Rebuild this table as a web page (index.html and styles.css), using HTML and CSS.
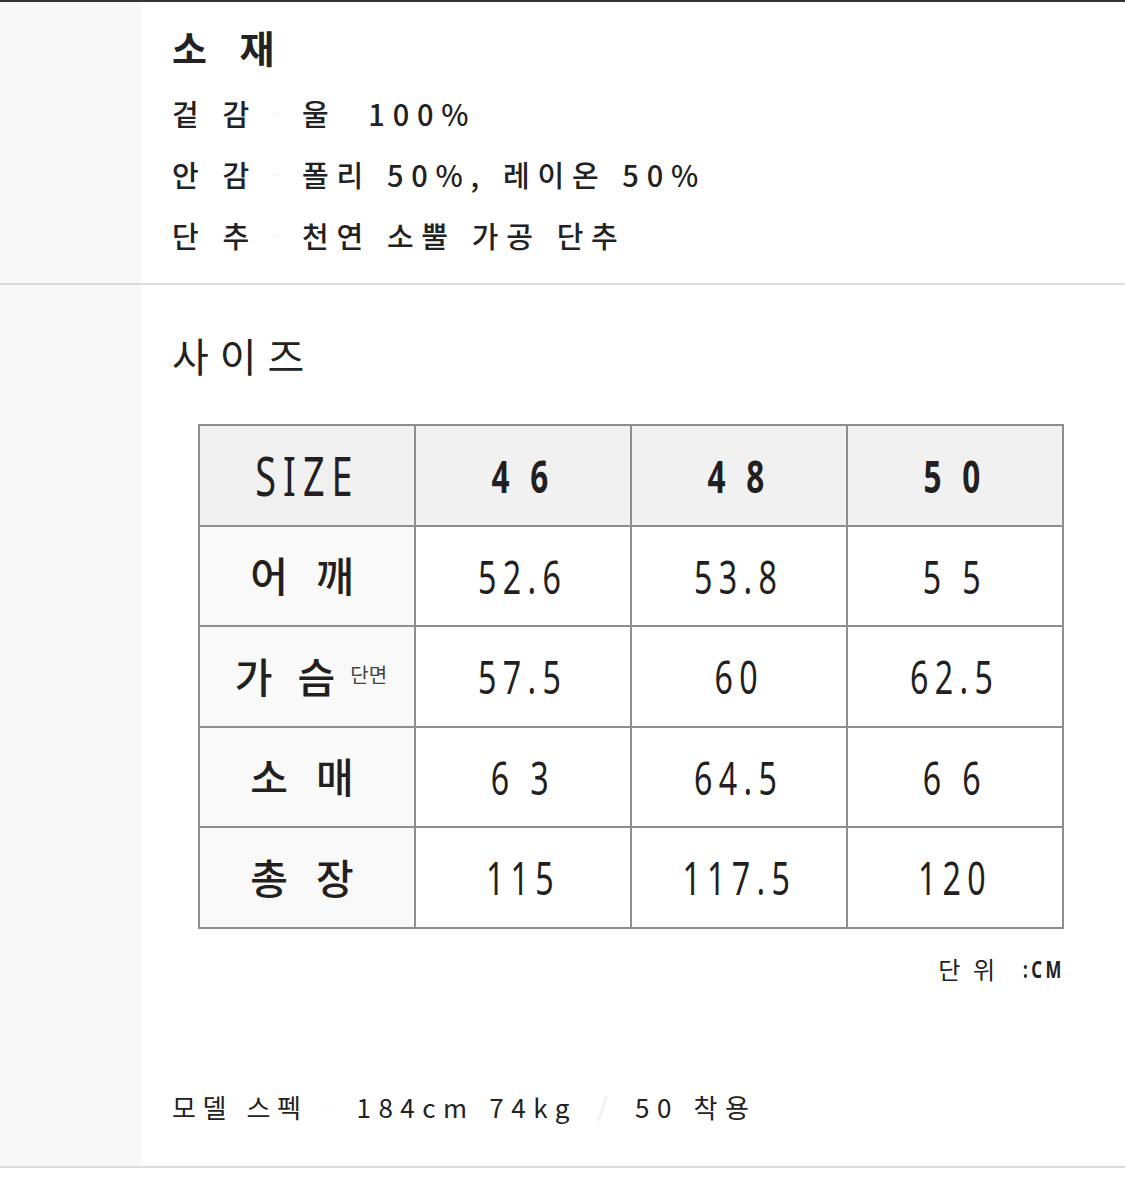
FILE: index.html
```html
<!DOCTYPE html>
<html lang="ko">
<head>
<meta charset="utf-8">
<link rel="stylesheet" href="styles.css">
</head>
<body>
<div class="page">
  <section class="sec sec-material">
    <div class="aside"></div>
    <div class="content">
      <h2 class="title">소 재</h2>
      <div class="row"><span class="label">겉 감</span><span class="sep">-</span><span class="value">울&nbsp;&nbsp;100%</span></div>
      <div class="row"><span class="label">안 감</span><span class="sep">-</span><span class="value">폴리 50%, 레이온 50%</span></div>
      <div class="row"><span class="label">단 추</span><span class="sep">-</span><span class="value">천연 소뿔 가공 단추</span></div>
    </div>
  </section>
  <section class="sec sec-size">
    <div class="aside"></div>
    <div class="content">
      <h2 class="title-size">사이즈</h2>
      <table class="size-table">
        <tr class="head">
          <th><span class="n n-size">SIZE</span></th>
          <th><span class="n n-head">4 6</span></th>
          <th><span class="n n-head">4 8</span></th>
          <th><span class="n n-head">5 0</span></th>
        </tr>
        <tr>
          <td class="rl"><span class="kl"><span>어</span><span>깨</span></span></td>
          <td><span class="n">52.6</span></td><td><span class="n">53.8</span></td><td><span class="n">5 5</span></td>
        </tr>
        <tr>
          <td class="rl"><span class="kl kl-chest"><span>가</span><span>슴</span><small>단면</small></span></td>
          <td><span class="n">57.5</span></td><td><span class="n">60</span></td><td><span class="n">62.5</span></td>
        </tr>
        <tr>
          <td class="rl"><span class="kl"><span>소</span><span>매</span></span></td>
          <td><span class="n">6 3</span></td><td><span class="n">64.5</span></td><td><span class="n">6 6</span></td>
        </tr>
        <tr>
          <td class="rl"><span class="kl"><span>총</span><span>장</span></span></td>
          <td><span class="n">115</span></td><td><span class="n">117.5</span></td><td><span class="n">120</span></td>
        </tr>
      </table>
      <div class="unit"><span class="unit-ko">단 위</span><span class="unit-en">:CM</span></div>
      <div class="model"><span class="m-label">모델 스펙</span><span class="m-sep">-</span><span class="m-val">184cm 74kg</span><span class="m-slash">/</span><span class="m-val">50 착용</span></div>
    </div>
  </section>
</div>
</body>
</html>
```
FILE: styles.css
```css
* { box-sizing: border-box; }
html, body { margin: 0; padding: 0; background: #fff; }
body {
  font-family: "Noto Sans CJK KR", "Noto Sans", sans-serif;
  color: #222;
}
.page {
  border-top: 2px solid #333;
}
.sec {
  display: flex;
  border-bottom: 2px solid #dcdcdc;
}
.aside {
  width: 141px;
  flex: none;
  background: #f8f8f8;
}
.content {
  flex: 1;
  padding-left: 31px;
}
.sec-material .content {
  padding-top: 22px;
  padding-bottom: 18px;
}
.title {
  margin: 0 0 12px;
  font-size: 38px;
  line-height: 46px;
  font-weight: 700;
  letter-spacing: 11px;
}
.row {
  display: flex;
  align-items: center;
  height: 61px;
  font-size: 29px;
  font-weight: 500;
  letter-spacing: 7.8px;
}
.label { width: 100px; }
.sep {
  width: 30px;
  color: #f0f0f0;
  font-size: 16px;
}
.value { white-space: pre; }

.sec-size .content {
  padding-top: 45px;
  padding-bottom: 41px;
}
.title-size {
  margin: 0;
  font-size: 40px;
  line-height: 50px;
  font-weight: 400;
  letter-spacing: 11px;
}
.size-table {
  margin: 44px 0 0 26px;
  border-collapse: collapse;
  table-layout: fixed;
  width: 865px;
  border: 2px solid #8e8e8e;
}
.size-table th, .size-table td {
  width: 216px;
  height: 100.5px;
  border: 2px solid #8e8e8e;
  text-align: center;
  vertical-align: middle;
  padding: 0;
  color: #231f20;
  font-weight: 400;
}
.head th { background: #f1f1f1; }
.n {
  display: inline-block;
  font-family: "Noto Sans", sans-serif;
  font-size: 46px;
  line-height: 1;
  letter-spacing: 9px;
  transform: scaleX(0.7);
  white-space: pre;
}
.n-head {
  font-size: 45px;
  font-weight: 700;
}
.n-size {
  font-size: 54px;
  letter-spacing: 10px;
}
.size-table td.rl { background: #f9f9f9; }
.kl {
  display: inline-flex;
  align-items: center;
  gap: 28px;
  font-size: 41px;
  font-weight: 500;
  line-height: 1;
  margin-right: 10px;
}
.kl-chest { margin-left: 8px; margin-right: 0; gap: 25px; }
.kl small {
  font-size: 20px;
  font-weight: 400;
  margin-left: -10px;
  color: #444;
}
.unit {
  width: 865px;
  height: 30px;
  margin: 25px 0 0 26px;
  display: flex;
  justify-content: flex-end;
  align-items: center;
}
.unit-ko {
  font-size: 24px;
  line-height: 30px;
  letter-spacing: 3px;
  margin-right: 7px;
}
.unit-en {
  display: inline-block;
  font-family: "Noto Sans", sans-serif;
  font-size: 24px;
  line-height: 30px;
  font-weight: 700;
  letter-spacing: 5px;
  margin-right: -2px;
  transform: scaleX(0.7);
  transform-origin: right center;
}
.model {
  display: flex;
  align-items: center;
  margin-top: 105px;
  height: 36px;
  font-size: 26px;
  letter-spacing: 6.5px;
}
.m-val { letter-spacing: 7.5px; }
.m-sep { width: 49px; text-align: center; color: #f0f0f0; font-size: 14px; }
.m-slash { width: 58px; text-align: center; color: #eee; }
```
